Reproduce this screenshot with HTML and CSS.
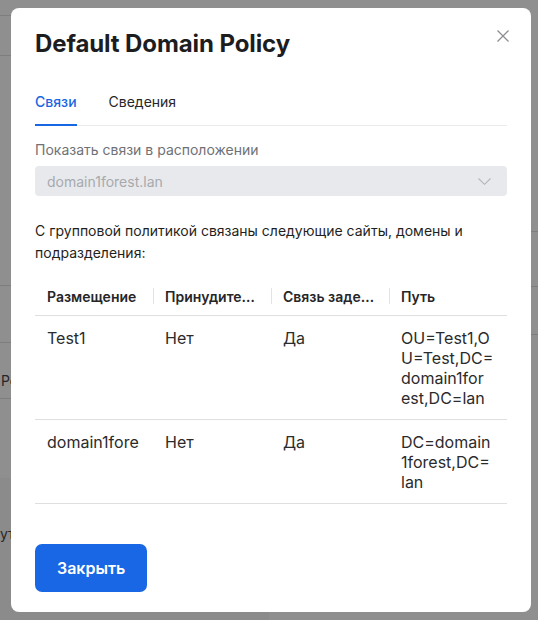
FILE: index.html
```html
<!DOCTYPE html>
<html lang="ru">
<head>
<meta charset="utf-8">
<title>Default Domain Policy</title>
<link rel="stylesheet" href="styles.css">
</head>
<body>
<div class="backdrop">
  <div class="bg-col">
    <div class="bg-row l1"></div>
    <div class="bg-row l2"></div>
    <div class="bg-row l3"></div>
    <div class="bg-row l4"></div>
    <div class="bg-row l5">Policy</div>
    <div class="bg-row l6"></div>
    <div class="bg-row l7">ут</div>
  </div>
  <div class="bg-col">
    <div class="bg-row r1"></div>
    <div class="bg-row r2"></div>
    <div class="bg-row r3"></div>
  </div>
</div>

<div class="modal" role="dialog" aria-labelledby="dlg-title">
  <h1 class="title" id="dlg-title">Default Domain Policy</h1>
  <button class="close" aria-label="Закрыть">
    <svg width="12" height="12" viewBox="0 0 12 12"><path d="M0.5 0.5 L11.5 11.5 M11.5 0.5 L0.5 11.5" stroke="#8f8f92" stroke-width="1.3" fill="none"/></svg>
  </button>

  <div class="tabs">
    <div class="tab active">Связи</div>
    <div class="tab">Сведения</div>
  </div>

  <div class="label">Показать связи в расположении</div>
  <div class="select">
    <span>domain1forest.lan</span>
    <svg width="13" height="7" viewBox="0 0 13 7"><path d="M0.5 0.5 L6.5 6.3 L12.5 0.5" stroke="#b4b6bb" stroke-width="1.1" fill="none"/></svg>
  </div>

  <p class="desc">С групповой политикой связаны следующие сайты, домены и подразделения:</p>

  <table class="links">
    <thead>
      <tr>
        <th>Размещение</th>
        <th>Принудительно</th>
        <th>Связь задействована</th>
        <th>Путь</th>
      </tr>
    </thead>
    <tbody>
      <tr>
        <td><span class="clip">Test1</span></td>
        <td>Нет</td>
        <td>Да</td>
        <td class="path">OU=Test1,O<br>U=Test,DC=<br>domain1for<br>est,DC=lan</td>
      </tr>
      <tr>
        <td><span class="clip">domain1forest.lan</span></td>
        <td>Нет</td>
        <td>Да</td>
        <td class="path">DC=domain<br>1forest,DC=<br>lan</td>
      </tr>
    </tbody>
  </table>

  <button class="btn">Закрыть</button>
</div>
</body>
</html>
```

FILE: styles.css
```css
* { box-sizing: border-box; }

body {
  margin: 0;
  font-family: Inter, "Noto Sans", "Liberation Sans", sans-serif;
  color: #1f1f21;
}

/* dimmed page behind the dialog */
.backdrop {
  display: grid;
  grid-template-columns: 1fr 1fr;
  height: 620px;
  background: #8f8f8f;
  overflow: hidden;
}
.bg-col { display: flex; flex-direction: column; }
.bg-row {
  border-bottom: 1px solid #7e7e7e;
  font-size: 14px;
  line-height: 20px;
  color: #262626;
  white-space: nowrap;
}
.l1 { height: 16px; }
.l2 { height: 40px; }
.l3 { height: 230px; }
.l4 { height: 57px; }
.l5 { height: 56px; padding: 28px 0 0 1px; }
.l6 { height: 79px; border-bottom: 0; }
.l7 { flex: 1; border-bottom: 0; background: #8b8b8b; padding-top: 46px; }
.r1 { height: 232px; }
.r2 { height: 55px; }
.r3 { height: 48px; }

/* dialog */
.modal {
  position: absolute;
  top: 8px;
  left: 11px;
  width: 520px;
  padding: 20px 24px 20px;
  background: #fff;
  border-radius: 8px;
}

.title {
  margin: 0;
  font-size: 24px;
  line-height: 32px;
  font-weight: 700;
  color: #1d1d1f;
  letter-spacing: -0.1px;
}

.close {
  position: absolute;
  top: 22px;
  right: 22px;
  width: 12px;
  height: 12px;
  padding: 0;
  border: 0;
  background: none;
  display: flex;
}

.tabs {
  display: flex;
  gap: 32px;
  margin-top: 24px;
  border-bottom: 1px solid #ebebed;
}
.tab {
  padding: 8px 0 12px;
  font-size: 14px;
  line-height: 20px;
  color: #262628;
  border-bottom: 2px solid transparent;
  margin-bottom: -1px;
}
.tab.active {
  color: #1766e3;
  font-weight: 500;
  border-bottom-color: #1766e3;
}

.label {
  margin-top: 14px;
  font-size: 14px;
  line-height: 20px;
  color: #6f7175;
}

.select {
  margin-top: 6px;
  height: 30px;
  display: flex;
  align-items: center;
  justify-content: space-between;
  padding: 0 16px 0 12px;
  background: #e8e9ec;
  border-radius: 4px;
  font-size: 14px;
  color: #a7a9ae;
}

.desc {
  margin: 24px 0 0;
  font-size: 14px;
  line-height: 22px;
  color: #1f1f21;
}

.links {
  width: 100%;
  margin-top: 14px;
  border-collapse: collapse;
  table-layout: fixed;
}
.links th {
  position: relative;
  padding: 9px 12px 8px;
  font-size: 14px;
  line-height: 20px;
  font-weight: 600;
  text-align: left;
  color: #262628;
  white-space: nowrap;
  overflow: hidden;
  text-overflow: ellipsis;
  border-bottom: 1px solid #dfdfe1;
}
.links th + th::before {
  content: "";
  position: absolute;
  left: 0;
  top: 10px;
  width: 1px;
  height: 16px;
  background: #e3e3e5;
}
.links td {
  padding: 12px 12px 11px;
  font-size: 16px;
  line-height: 20px;
  vertical-align: top;
  color: #2b2b2d;
  border-bottom: 1px solid #dfdfe1;
}
.links .clip {
  display: block;
  width: 92px;
  white-space: nowrap;
  overflow: hidden;
}
.links td.path { white-space: nowrap; }

.btn {
  display: block;
  margin-top: 40px;
  height: 48px;
  padding: 0 22px;
  border: 0;
  border-radius: 7px;
  background: #1967e4;
  color: #fff;
  font-family: inherit;
  font-size: 16px;
  font-weight: 600;
}
```
